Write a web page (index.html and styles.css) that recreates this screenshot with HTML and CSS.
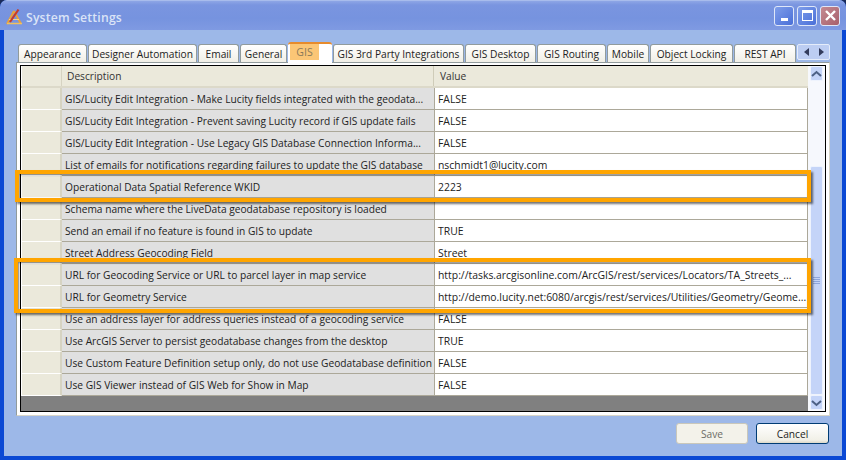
FILE: index.html
```html
<!DOCTYPE html>
<html lang="en">
<head>
<meta charset="utf-8">
<title>System Settings</title>
<link rel="stylesheet" href="styles.css">
</head>
<body>
<div class="window">
  <header class="titlebar">
    <svg class="logo" width="18" height="18" viewBox="0 0 18 18"><path d="M9 3 L2 16 M9 3 L16 16" fill="none" stroke="#e8a13c" stroke-width="2"/><path d="M2 15.5 H17" stroke="#f0c060" stroke-width="1.6"/><path d="M4 11.5 H14" stroke="#f2d28a" stroke-width="1"/><path d="M13.5 1.5 L5 14" stroke="#c43a2e" stroke-width="2.2"/></svg>
    <span class="title">System Settings</span>
    <div class="controls">
      <button class="ctl"><span class="min"></span></button>
      <button class="ctl"><span class="max"></span></button>
      <button class="ctl close"><svg width="13" height="13" viewBox="0 0 13 13"><path d="M2 2 L11 11 M11 2 L2 11" stroke="#fff" stroke-width="2.4"/></svg></button>
    </div>
  </header>
  <div class="client">
    <nav class="tabs">
      <span class="tab w-appearance">Appearance</span>
      <span class="tab w-designer">Designer Automation</span>
      <span class="tab w-email">Email</span>
      <span class="tab w-general">General</span>
      <span class="tab active"><span class="hl">GIS</span></span>
      <span class="tab w-3rd">GIS 3rd Party Integrations</span>
      <span class="tab w-desktop">GIS Desktop</span>
      <span class="tab w-routing">GIS Routing</span>
      <span class="tab w-mobile">Mobile</span>
      <span class="tab w-locking">Object Locking</span>
      <span class="tab w-rest">REST API</span>
      <span class="tabnav"><svg width="8" height="8" viewBox="0 0 8 8"><path d="M6 0 L1 4 L6 8 Z" fill="#333c5c"/></svg><svg width="8" height="8" viewBox="0 0 8 8"><path d="M2 0 L7 4 L2 8 Z" fill="#333c5c"/></svg></span>
    </nav>
    <section class="page">
      <div class="gridframe">
        <div class="grid">
          <div class="head"><span class="corner"></span><span class="hc desc">Description</span><span class="hc val">Value</span></div>
          <div class="row"><span class="rh"></span><span class="d">GIS/Lucity Edit Integration - Make Lucity fields integrated with the geodata...</span><span class="v">FALSE</span></div>
          <div class="row"><span class="rh"></span><span class="d">GIS/Lucity Edit Integration - Prevent saving Lucity record if GIS update fails</span><span class="v">FALSE</span></div>
          <div class="row"><span class="rh"></span><span class="d">GIS/Lucity Edit Integration - Use Legacy GIS Database Connection Informa...</span><span class="v">FALSE</span></div>
          <div class="row"><span class="rh"></span><span class="d">List of emails for notifications regarding failures to update the GIS database</span><span class="v">nschmidt1@lucity.com</span></div>
          <div class="row"><span class="rh"></span><span class="d">Operational Data Spatial Reference WKID</span><span class="v">2223</span></div>
          <div class="row"><span class="rh"></span><span class="d">Schema name where the LiveData geodatabase repository is loaded</span><span class="v"></span></div>
          <div class="row"><span class="rh"></span><span class="d">Send an email if no feature is found in GIS to update</span><span class="v">TRUE</span></div>
          <div class="row"><span class="rh"></span><span class="d">Street Address Geocoding Field</span><span class="v">Street</span></div>
          <div class="row"><span class="rh"></span><span class="d">URL for Geocoding Service or URL to parcel layer in map service</span><span class="v">http://tasks.arcgisonline.com/ArcGIS/rest/services/Locators/TA_Streets_...</span></div>
          <div class="row"><span class="rh"></span><span class="d">URL for Geometry Service</span><span class="v">http://demo.lucity.net:6080/arcgis/rest/services/Utilities/Geometry/Geome...</span></div>
          <div class="row"><span class="rh"></span><span class="d">Use an address layer for address queries instead of a geocoding service</span><span class="v">FALSE</span></div>
          <div class="row"><span class="rh"></span><span class="d">Use ArcGIS Server to persist geodatabase changes from the desktop</span><span class="v">TRUE</span></div>
          <div class="row"><span class="rh"></span><span class="d">Use Custom Feature Definition setup only, do not use Geodatabase definition</span><span class="v">FALSE</span></div>
          <div class="row"><span class="rh"></span><span class="d">Use GIS Viewer instead of GIS Web for Show in Map</span><span class="v">FALSE</span></div>
          <div class="empty"></div>
        </div>
        <div class="scrollbar">
          <span class="sbtn"><svg width="11" height="8" viewBox="0 0 11 8"><path d="M1 6 L5.5 2 L10 6" fill="none" stroke="#4d6185" stroke-width="2"/></svg></span>
          <span class="strack"></span>
          <span class="thumb"><span class="grip"></span></span>
          <span class="sbtn"><svg width="11" height="8" viewBox="0 0 11 8"><path d="M1 2 L5.5 6 L10 2" fill="none" stroke="#4d6185" stroke-width="2"/></svg></span>
        </div>
      </div>
    </section>
    <footer class="actions">
      <button class="btn disabled">Save</button>
      <button class="btn">Cancel</button>
    </footer>
  </div>
  <div class="callout c1"></div>
  <div class="callout c2"></div>
</div>
</body>
</html>
```
FILE: styles.css
```css
* { box-sizing: border-box; }
html, body { margin: 0; padding: 0; background: #1a2a5a; }
body { width: 846px; height: 460px; overflow: hidden; font-family: "Open Sans", "Liberation Sans", sans-serif; font-size: 10.2px; color: #222; }
.window { position: relative; width: 846px; height: 460px; display: flex; flex-direction: column; background: #0a48d4; border-radius: 7px 7px 0 0; overflow: hidden; }
.titlebar { height: 30px; flex: none; display: flex; align-items: center; padding: 0 6px 0 5px; background: linear-gradient(#8ea6e6 0, #7a95e0 4px, #7693df 60%, #7f9ae2 100%); border-top: 1px solid #a8bcec; }
.logo { flex: none; margin-top: 3px; }
.title { margin: 3px 0 0 3px; font-weight: 600; font-size: 12.2px; color: #dbe4f7; letter-spacing: .2px; }
.controls { margin-left: auto; display: flex; gap: 3px; }
.ctl { width: 20px; height: 20px; padding: 0; border: 1px solid #dfe7f8; border-radius: 3px; background: linear-gradient(135deg, #7f9eea, #4a6fd8); display: flex; align-items: center; justify-content: center; }
.ctl.close { background: linear-gradient(135deg, #c48a92, #a8606c); }
.min { width: 7px; height: 3px; background: #fff; margin-top: 7px; }
.max { width: 11px; height: 11px; border: 1px solid #fff; border-top-width: 3px; }
.client { flex: 1; margin: 0 4px 4px 4px; background: #9db8e8; padding: 14px 12px 0 12px; display: flex; flex-direction: column; }
.tabs { height: 18px; padding-left: 2px; display: flex; align-items: flex-end; flex: none; position: relative; z-index: 1; }
.tab { height: 18px; flex: none; margin-right: 1px; display: flex; align-items: center; justify-content: center; background: linear-gradient(#fff, #f1efe6); border: 1px solid #919b9c; border-bottom: 0; border-radius: 3px 3px 0 0; white-space: nowrap; }
.w-appearance { width: 69px; }
.w-designer { width: 109px; }
.w-email { width: 41px; }
.w-general { width: 47px; }
.w-3rd { width: 131px; }
.w-desktop { width: 71px; }
.w-routing { width: 69px; }
.w-mobile { width: 42px; }
.w-locking { width: 83px; }
.w-rest { width: 62px; }
.tab.active { width: 44px; height: 21px; justify-content: flex-start; align-items: flex-start; padding: 0 0 0 2px; background: #fff; border: 0; border-top: 2px solid #e68b2c; margin-bottom: -1px; }
.hl { display: block; width: 29px; height: 16px; background: #fbc676; color: #8a7a5a; text-align: center; font-size: 10.5px; line-height: 16px; }
.tabnav { width: 33px; height: 16px; flex: none; margin-bottom: 2px; display: flex; align-items: center; justify-content: center; gap: 6px; border: 1px solid #e4ecfa; border-radius: 2px; background: #bccdf2; }
.page { width: 814px; height: 354px; flex: none; background: #fff; border: 1px solid #919b9c; border-right-color: #d8d5c8; border-bottom-color: #d8d5c8; padding: 2px 3px 3px 3px; }
.gridframe { width: 100%; height: 100%; display: flex; border: 1px solid #000; background: #fff; }
.grid { width: 787px; flex: none; display: flex; flex-direction: column; background: #808080; }
.head { height: 22px; flex: none; display: grid; grid-template-columns: 41px 372px 374px; background: #ebe9db; border-bottom: 2px solid #dcd9c9; }
.corner { border-left: 1px solid #fff; border-right: 1px solid #d6d3c2; }
.hc { display: flex; align-items: center; padding-left: 5px; color: #333; }
.hc.val { padding-left: 6px; }
.hc.desc { border-right: 1px solid #cfccb9; }
.row { height: 22px; flex: none; display: grid; grid-template-columns: 41px 372px 374px; background: #fff; border-bottom: 1px solid #aca899; }
.rh { background: #ebe9db; border-left: 1px solid #fff; border-right: 2px solid #d6d3c2; border-bottom: 1px solid #fff; margin-bottom: -1px; }
.d { display: flex; align-items: center; padding-left: 3px; background: #e0e0e0; white-space: nowrap; overflow: hidden; }
.v { display: flex; align-items: center; padding-left: 3px; border-left: 1px solid #aca899; border-right: 1px solid #aca899; white-space: nowrap; overflow: hidden; background: #fff; font-size: 10.4px; }
.empty { flex: 1; background: #808080; }
.scrollbar { flex: 1; display: flex; flex-direction: column; background: #f6f8fd; padding: 0 2px 1px 2px; }
.sbtn { height: 15px; flex: none; display: flex; align-items: center; justify-content: center; background: #c4d4f8; border: 1px solid #eef3fd; border-radius: 2px; }
.strack { height: 85px; flex: none; }
.thumb { flex: 1; background: #c4d4f8; border: 1px solid #eef3fd; border-radius: 2px; display: flex; align-items: center; justify-content: center; }
.grip { width: 7px; height: 7px; background: repeating-linear-gradient(#8ea6dc 0 1px, transparent 1px 2px); }
.actions { flex: 1; display: flex; justify-content: flex-end; align-items: flex-start; gap: 8px; padding: 7px 1px 0 0; }
.btn { width: 73px; height: 21px; padding: 0; border: 1px solid #003c74; border-radius: 3px; background: linear-gradient(#fff, #f1f0e7 85%, #dcd8c8); font-family: inherit; font-size: 10.2px; color: #222; }
.btn.disabled { width: 72px; border-color: #c9c7ba; background: #f3f2ea; color: #6d6d66; }
.callout { position: absolute; border: 4px solid #ffa500; box-shadow: 2px 2px 2px rgba(0,0,0,.55), inset 1px 1px 2px rgba(0,0,0,.5); }
.c1 { left: 15px; top: 170px; width: 796px; height: 32px; }
.c2 { left: 14px; top: 258px; width: 797px; height: 55px; }
```
